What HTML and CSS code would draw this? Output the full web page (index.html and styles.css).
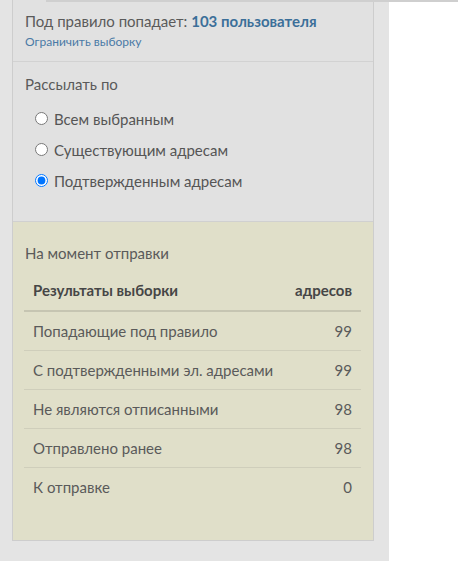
FILE: index.html
```html
<!DOCTYPE html>
<html lang="ru">
<head>
<meta charset="utf-8">
<link rel="stylesheet" href="styles.css">
</head>
<body>
<div class="topline"></div>
<div class="panel">
  <div class="box">
    <section class="sec sec-rule">
      <div class="rule">Под правило попадает: <a class="count">103 пользователя</a></div>
      <a class="limit">Ограничить выборку</a>
    </section>
    <section class="sec sec-send">
      <div class="label">Рассылать по</div>
      <label class="radio"><input type="radio" name="s"><span>Всем выбранным</span></label>
      <label class="radio"><input type="radio" name="s"><span>Существующим адресам</span></label>
      <label class="radio"><input type="radio" name="s" checked><span>Подтвержденным адресам</span></label>
    </section>
    <section class="sec sec-result">
      <div class="label">На момент отправки</div>
      <table class="tbl">
        <thead>
          <tr><th class="l">Результаты выборки</th><th class="r">адресов</th></tr>
        </thead>
        <tbody>
          <tr><td>Попадающие под правило</td><td class="r">99</td></tr>
          <tr><td>С подтвержденными эл. адресами</td><td class="r">99</td></tr>
          <tr><td>Не являются отписанными</td><td class="r">98</td></tr>
          <tr><td>Отправлено ранее</td><td class="r">98</td></tr>
          <tr class="last"><td>К отправке</td><td class="r">0</td></tr>
        </tbody>
      </table>
    </section>
  </div>
</div>
</body>
</html>
```
FILE: styles.css
```css
html, body {
  margin: 0;
  padding: 0;
  background: #ffffff;
  font-family: Lato, "Open Sans", "Liberation Sans", sans-serif;
  color: #555555;
}
.topline {
  position: absolute;
  top: 0;
  left: 46px;
  right: 0;
  height: 2px;
  background: #cfcfcf;
}
.panel {
  width: 389px;
  height: 561px;
  background: #e4e4e4;
  padding-left: 12px;
  box-sizing: border-box;
}
.box {
  width: 362px;
  height: 541px;
  box-sizing: border-box;
  border: 1px solid #cdcdcd;
  border-top: none;
  background: #e1e1e1;
  display: flex;
  flex-direction: column;
}
.sec {
  padding-left: 12px;
  padding-right: 11px;
}
.sec-rule {
  height: 62px;
  box-sizing: border-box;
  padding-top: 10px;
  border-bottom: 1px solid #d2d2d2;
}
.rule {
  font-size: 15px;
  line-height: 22px;
  color: #5a5a5a;
}
.count {
  color: #3b6f99;
  font-weight: 700;
}
.limit {
  display: block;
  font-size: 12px;
  line-height: 19px;
  color: #4a7aa6;
}
.sec-send {
  height: 160px;
  box-sizing: border-box;
  padding-top: 11px;
  border-bottom: 1px solid #d0d0d0;
}
.label {
  font-size: 15px;
  line-height: 22px;
  color: #5a5a5a;
}
.sec-send .label {
  margin-bottom: 8px;
}
.radio {
  display: flex;
  align-items: center;
  height: 31px;
  font-size: 15px;
  color: #555;
  padding-left: 3px;
}
.radio input {
  margin: 0 6px 0 7px;
  width: 13px;
  height: 13px;
}
.sec-result {
  flex: 1;
  background: #e0dfc9;
  padding-top: 20px;
}
.tbl {
  margin-top: 6px;
  margin-left: -1px;
  width: 337px;
  border-collapse: collapse;
  font-size: 15px;
}
.tbl th {
  height: 40px;
  padding: 0 9px;
  font-weight: 700;
  color: #464646;
  border-bottom: 2px solid #c6c5b2;
}
.tbl th.l { text-align: left; }
.tbl td {
  height: 38px;
  padding: 0 9px;
  color: #5a5a5a;
  white-space: nowrap;
  border-bottom: 1px solid #cfcebb;
}
.tbl tr.last td { border-bottom: none; }
.r { text-align: right; }
```
